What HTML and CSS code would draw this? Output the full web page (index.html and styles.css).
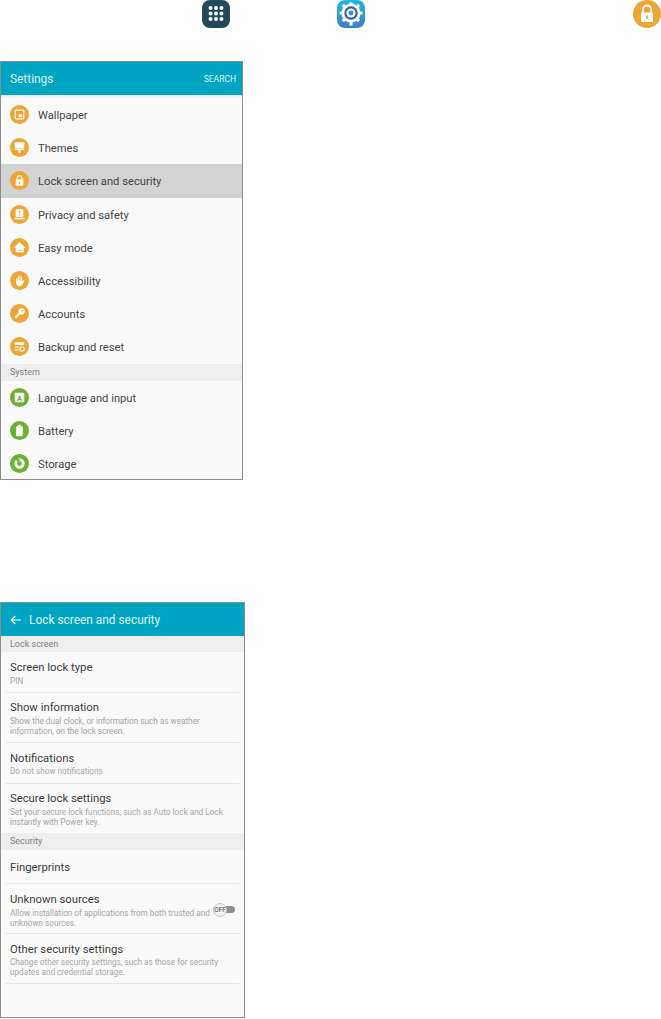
FILE: index.html
```html
<!DOCTYPE html>
<html lang="en">
<head>
  <meta charset="UTF-8" />
  <title>Lock screen and security</title>
  <link rel="stylesheet" href="styles.css">
</head>
<body>

<div class="path-icons">
  <svg class="path-icon" viewBox="0 0 28 28">
    <rect width="28" height="28" rx="8" fill="#23495c"/>
    <g fill="#fff">
      <circle cx="8.5" cy="8" r="2"/><circle cx="14" cy="8" r="2"/><circle cx="19.5" cy="8" r="2"/>
      <circle cx="8.5" cy="13.5" r="2"/><circle cx="14" cy="13.5" r="2"/><circle cx="19.5" cy="13.5" r="2"/>
      <circle cx="8.5" cy="19" r="2"/><circle cx="14" cy="19" r="2"/><circle cx="19.5" cy="19" r="2"/>
    </g>
  </svg>
  <svg class="path-icon" viewBox="0 0 28 28">
    <defs>
      <linearGradient id="gearBg" x1="0" y1="0" x2="0" y2="1">
        <stop offset="0" stop-color="#22b8e0"/>
        <stop offset="1" stop-color="#3f7fc0"/>
      </linearGradient>
    </defs>
    <rect width="28" height="28" rx="8" fill="url(#gearBg)"/>
    <g stroke="#fff" stroke-width="3">
      <path d="M14 2.5v23M2.5 13h23M5.9 4.9l16.2 16.2M22.100 4.900L5.900 21.100"/>
    </g>
    <circle cx="14" cy="13" r="9.500" fill="#fff"/>
    <circle cx="14" cy="13" r="6.700" fill="#2f5fb5"/>
    <circle cx="14" cy="13" r="4.600" fill="#fff"/>
    <circle cx="14" cy="13" r="2.400" fill="#2f8fd0"/>
  </svg>
  <svg class="path-icon" viewBox="0 0 28 28">
    <circle cx="14" cy="14" r="14" fill="#eea736"/>
    <path d="M10 13v-3.500a4 4 0 0 1 8 0V13" fill="none" stroke="#fff" stroke-width="1.800"/>
    <rect x="8" y="12.500" width="12" height="9.500" rx="1" fill="#fff"/>
    <rect x="13.200" y="15.500" width="1.600" height="3.500" fill="#eea736"/>
  </svg>
</div>

<div class="phone phone-list">
  <div class="app-bar">
    <span class="bar-title">Settings</span>
    <span class="bar-action">SEARCH</span>
  </div>
  <div class="bar-edge"></div>
  <div class="menu-row">
    <svg class="round" viewBox="0 0 20 20"><circle cx="10" cy="10" r="10" fill="#eea736"/><rect x="5.500" y="5.500" width="9" height="9" rx="1" fill="none" stroke="#fff" stroke-width="1.300"/><rect x="9" y="10" width="3.500" height="2.500" fill="#fff"/></svg>
    <span>Wallpaper</span>
  </div>
  <div class="menu-row">
    <svg class="round" viewBox="0 0 20 20"><circle cx="10" cy="10" r="10" fill="#eea736"/><rect x="5" y="4.500" width="10" height="6" rx="1" fill="#fff"/><rect x="5" y="11" width="10" height="1.500" fill="#fff"/><rect x="9" y="12.500" width="2" height="3.500" fill="#fff"/></svg>
    <span>Themes</span>
  </div>
  <div class="menu-row selected">
    <svg class="round" viewBox="0 0 20 20"><circle cx="10" cy="10" r="10" fill="#eea736"/><path d="M7.500 9.500V7.500a2.500 2.500 0 0 1 5 0v2" fill="none" stroke="#fff" stroke-width="1.300"/><rect x="6" y="9" width="8" height="6.500" rx="1" fill="#fff"/><rect x="9.400" y="11" width="1.200" height="2.500" fill="#eea736"/></svg>
    <span>Lock screen and security</span>
  </div>
  <div class="menu-row">
    <svg class="round" viewBox="0 0 20 20"><circle cx="10" cy="10" r="10" fill="#eea736"/><rect x="6" y="4.500" width="8" height="8" rx="1" fill="#fff"/><rect x="9.300" y="6" width="1.400" height="3" fill="#eea736"/><rect x="9.300" y="9.800" width="1.400" height="1.300" fill="#eea736"/><rect x="4.500" y="13.500" width="11" height="1.500" fill="#fff"/></svg>
    <span>Privacy and safety</span>
  </div>
  <div class="menu-row">
    <svg class="round" viewBox="0 0 20 20"><circle cx="10" cy="10" r="10" fill="#eea736"/><path d="M10 4.500L3.500 10.500H6V15h8.500v-4.500H16.500z" fill="#fff"/><rect x="9" y="12.500" width="4" height="1" fill="#eea736"/></svg>
    <span>Easy mode</span>
  </div>
  <div class="menu-row">
    <svg class="round" viewBox="0 0 20 20"><circle cx="10" cy="10" r="10" fill="#eea736"/><path d="M6.500 8v4.500c0 2 1.500 3.500 3.500 3.500s3-1 3.500-2.500l2-3.500-1-.5-1.700 2V6h-1v4h-.7V4.500h-1.100V10h-.8V5.500H8V10.500h-.6V8z" fill="#fff"/></svg>
    <span>Accessibility</span>
  </div>
  <div class="menu-row">
    <svg class="round" viewBox="0 0 20 20"><circle cx="10" cy="10" r="10" fill="#eea736"/><circle cx="12.300" cy="7.700" r="3.300" fill="#fff"/><path d="M10.500 9.500L5.500 14.500" stroke="#fff" stroke-width="2"/><circle cx="13" cy="7" r="1" fill="#eea736"/></svg>
    <span>Accounts</span>
  </div>
  <div class="menu-row">
    <svg class="round" viewBox="0 0 20 20"><circle cx="10" cy="10" r="10" fill="#eea736"/><path d="M5 5.500h10v3H5zM5 10h4v1.300H5zM5 12.800h4v1.300H5z" fill="#fff"/><circle cx="12.700" cy="12.500" r="2.200" fill="none" stroke="#fff" stroke-width="1.200"/></svg>
    <span>Backup and reset</span>
  </div>
  <div class="section-head section-system">System</div>
  <div class="menu-row">
    <svg class="round" viewBox="0 0 20 20"><circle cx="10" cy="10" r="10" fill="#6cb131"/><rect x="5" y="5" width="10" height="10" rx="1" fill="#fff"/><text x="10" y="13.300" class="key-letter">A</text></svg>
    <span>Language and input</span>
  </div>
  <div class="menu-row">
    <svg class="round" viewBox="0 0 20 20"><circle cx="10" cy="10" r="10" fill="#6cb131"/><rect x="8.500" y="4" width="3" height="2" fill="#fff"/><rect x="6.500" y="5.500" width="7" height="10.500" rx="1" fill="#fff"/></svg>
    <span>Battery</span>
  </div>
  <div class="menu-row">
    <svg class="round" viewBox="0 0 20 20"><circle cx="10" cy="10" r="10" fill="#6cb131"/><circle cx="10" cy="10" r="4" fill="none" stroke="#fff" stroke-width="3"/><path d="M10 10L5 5h5z" fill="#6cb131"/></svg>
    <span>Storage</span>
  </div>
</div>

<div class="phone phone-detail">
  <div class="app-bar">
    <svg class="back" viewBox="0 0 12 10"><path d="M11 5H1.500M5.300 1L1.300 5l4 4" fill="none" stroke="#fff" stroke-width="1.200"/></svg>
    <span class="bar-title">Lock screen and security</span>
  </div>
  <div class="section-head">Lock screen</div>
  <div class="pref short">
    <div class="pref-title">Screen lock type</div>
    <div class="pref-sub">PIN</div>
  </div>
  <div class="pref">
    <div class="pref-title">Show information</div>
    <div class="pref-sub">Show the dual clock, or information such as weather<br>information, on the lock screen.</div>
  </div>
  <div class="pref short tight">
    <div class="pref-title">Notifications</div>
    <div class="pref-sub">Do not show notifications</div>
  </div>
  <div class="pref last">
    <div class="pref-title">Secure lock settings</div>
    <div class="pref-sub">Set your secure lock functions, such as Auto lock and Lock<br>instantly with Power key.</div>
  </div>
  <div class="section-head section-security">Security</div>
  <div class="pref single">
    <div class="pref-title">Fingerprints</div>
  </div>
  <div class="pref lower">
    <div class="pref-title">Unknown sources</div>
    <div class="pref-sub">Allow installation of applications from both trusted and<br>unknown sources.</div>
    <div class="switch"><span class="knob">OFF</span></div>
  </div>
  <div class="pref lower tight">
    <div class="pref-title">Other security settings</div>
    <div class="pref-sub">Change other security settings, such as those for security<br>updates and credential storage.</div>
  </div>
</div>

</body>
</html>
```
FILE: styles.css
```css
body {
  margin: 0;
  background: #fff;
  font-family: Roboto, "Liberation Sans", sans-serif;
  color: #333;
}

.path-icons {
  display: flex;
  height: 28px;
  padding-left: 202px;
}

.path-icon {
  flex: none;
  width: 28px;
  height: 28px;
  margin-right: 107px;
}

.path-icon:nth-child(2) {
  margin-right: 268px;
}

.path-icon:last-child {
  margin-right: 0;
}

.phone {
  box-sizing: border-box;
  border: 1px solid #8c8c8c;
  background: #fafafa;
}

.phone-list {
  width: 243px;
  height: 419px;
  margin-top: 33px;
}

.phone-detail {
  width: 245px;
  height: 416px;
  margin-top: 122px;
}

.app-bar {
  display: flex;
  align-items: center;
  justify-content: space-between;
  height: 33px;
  padding: 0 6px 0 9px;
  background: #00a5c4;
  color: #dff3f7;
}

.bar-edge {
  height: 3px;
  background: linear-gradient(#dde9ec, #fafafa);
}

.bar-title {
  font-size: 11.9px;
}

.bar-action {
  font-size: 8.5px;
}

.phone-detail .app-bar {
  justify-content: flex-start;
  gap: 7px;
}

.back {
  width: 12px;
  height: 10px;
}

.menu-row {
  display: flex;
  align-items: center;
  gap: 9px;
  height: 33.2px;
  padding-left: 9px;
  font-size: 11.2px;
  color: #444;
}

.menu-row span {
  padding-top: 2px;
}

.menu-row.selected {
  background: #d3d3d3;
}

.round {
  width: 19px;
  height: 19px;
  flex: none;
}

.key-letter {
  font-size: 8px;
  font-weight: 700;
  fill: #6cb131;
  text-anchor: middle;
}

.section-head {
  height: 16px;
  line-height: 16px;
  padding-left: 9px;
  background: #eeeeee;
  font-size: 9px;
  color: #808080;
}

.section-system,
.section-security {
  height: 17px;
  line-height: 17px;
}

.pref {
  position: relative;
  box-sizing: border-box;
  height: 50px;
  margin: 0 5px;
  padding: 7px 0 0 4px;
  border-bottom: 1px solid #e6e6e6;
}

.pref.short {
  height: 41px;
  padding-top: 8px;
}

.pref.last {
  height: 49px;
  border-bottom: none;
}

.pref.single {
  height: 34px;
  padding-top: 10px;
}

.pref.lower {
  padding-top: 8px;
}

.pref-title {
  font-size: 11.3px;
  line-height: 15px;
  color: #3c3c3c;
}

.pref-sub {
  margin-top: 1px;
  font-size: 8.2px;
  line-height: 10px;
  color: #a6a6a6;
}

.tight .pref-sub {
  margin-top: 0;
}

.switch {
  position: absolute;
  right: 4px;
  top: 22px;
  width: 22px;
  height: 7px;
  border-radius: 4px;
  background: #8f8f8f;
}

.knob {
  position: absolute;
  left: 0;
  top: -3px;
  width: 12px;
  height: 12px;
  border-radius: 50%;
  border: 1px solid #c4c4c4;
  background: #f1f1f1;
  font-size: 6.5px;
  line-height: 12px;
  text-align: center;
  color: #444;
}
```
